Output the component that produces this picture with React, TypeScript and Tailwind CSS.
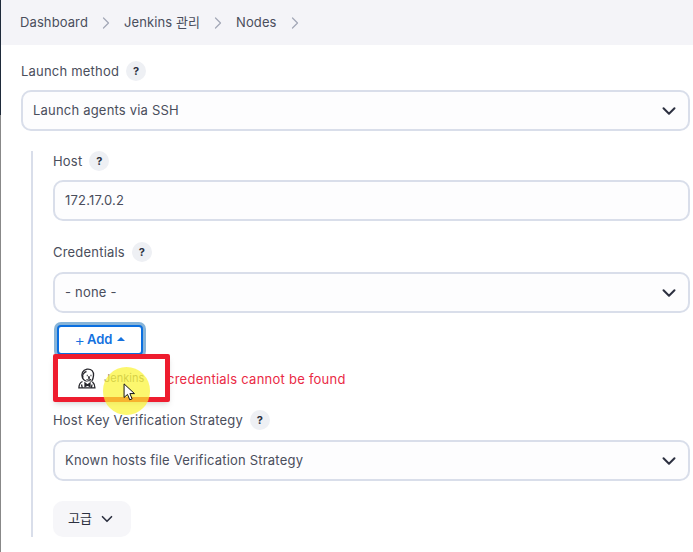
import { ChevronDown, ChevronRight } from "lucide-react";

const FONT = "font-['Inter','Noto_Sans_CJK_KR',sans-serif]";

function Help() {
  return (
    <span className="flex h-5 w-5 items-center justify-center rounded-full bg-[#eef0f4] text-[11px] font-bold text-[#2c3040]">
      ?
    </span>
  );
}

function Label({ text }: { text: string }) {
  return (
    <div className="flex h-5 items-center gap-[7px] text-[13px] tracking-[0.2px] text-[#4a4e5c]">
      <span className="pt-[1px]">{text}</span>
      <Help />
    </div>
  );
}

function Field({ value, select }: { value: string; select?: boolean }) {
  return (
    <div className="flex h-[41px] items-center justify-between rounded-[10px] border-2 border-[#d9deea] bg-[#fdfdfe] pl-[10px] pr-[8px] text-[13px] tracking-[0.2px] text-[#4a4e5c]">
      <span>{value}</span>
      {select && <ChevronDown className="h-[22px] w-[22px] text-[#2c3040]" strokeWidth={2.2} />}
    </div>
  );
}

function Crumb({ text }: { text: string }) {
  return (
    <>
      <span>{text}</span>
      <ChevronRight className="h-5 w-5 text-[#a3a8b8]" strokeWidth={1.5} />
    </>
  );
}

function JenkinsFace() {
  return (
    <svg viewBox="0 0 18 21" className="h-[21px] w-[18px]" fill="none" stroke="#26262c" strokeWidth="1.3">
      <path d="M4.500 10C3 6 4.500 1.800 9 1.100c4.500-.5 7 2.400 6.500 6.500-.2 2-.6 3.500-1.400 4.900-1.200 1.800-3.600 2.200-5.500 1.100C6.700 12.800 5.300 12 4.500 10Z" fill="#ffffff" />
      <path d="M5 6.500c1-2 2-2.800 3.500-3M5.500 9c-1 0-1.300-1.800-.3-2.300" />
      <path d="M8.800 7.500h.9M12.500 7.500h.9M11 8l-.3 2h1.300M8.500 11.500c1.500.9 3 .9 4.500-.1" />
      <path d="M4.500 13.500C2.500 14.300 1 16 .9 19.800h16c-.2-2.500-.8-4.500-2.500-6" fill="#ffffff" />
      <path d="M7 15l2.500 2 2.500-2v3.500l-2.500-1.300L7 18.500Z" fill="#26262c" />
      <path d="M3.500 16.500l.8 3.300M14 16.500l-.6 3.300" />
    </svg>
  );
}

function CursorHighlight() {
  return (
    <div className="pointer-events-none absolute left-[103px] top-[367px] h-[48px] w-[47px] rounded-full bg-[#fbf430]/70">
      <svg viewBox="0 0 14 21" className="absolute left-[20px] top-[16px] h-[19px] w-[13px]">
        <path d="M1 1v15l3.800-3.400 2.500 6 2.600-1.100-2.500-5.800H12.500Z" fill="#ffffff" stroke="#111111" strokeWidth="1.100" />
      </svg>
    </div>
  );
}

export default function App() {
  return (
    <div className={`relative h-[552px] w-[693px] overflow-hidden bg-white ${FONT}`}>
      <div className="flex h-[45px] items-center bg-[#f4f4f8] pl-5 text-[13px] tracking-[0.1px] text-[#4a4e5c]">
        <div className="flex items-center gap-2">
          <Crumb text="Dashboard" />
          <Crumb text="Jenkins 관리" />
          <Crumb text="Nodes" />
        </div>
      </div>

      <div className="pl-[21px] pr-[3px] pt-4">
        <Label text="Launch method" />
        <div className="mt-[9px]">
          <Field value="Launch agents via SSH" select />
        </div>

        <div className="ml-[10px] mt-5 h-[386px] border-l-2 border-[#d9deea] pl-5">
          <Label text="Host" />
          <div className="mt-[9px]">
            <Field value="172.17.0.2" />
          </div>

          <div className="mt-[21px]">
            <Label text="Credentials" />
          </div>
          <div className="mt-[10px]">
            <Field value="- none -" select />
          </div>

          <div className="ml-px mt-[9px] h-[36px] w-[92px] rounded-[7px] bg-[#87b4d8] p-[3px]">
            <div className="flex h-[30px] items-center justify-center gap-[5px] rounded-[4px] border-2 border-[#0b6fe0] bg-white text-[13px] text-[#1472df]">
              <span className="text-[16px] font-light leading-none">+</span>
              <span className="-ml-[3px] font-semibold">Add</span>
              <span className="mb-[2px] h-0 w-0 border-x-[4px] border-b-[4px] border-x-transparent border-b-[#1472df]" />
            </div>
          </div>

          <div className="mt-[11px] h-[20px] pl-[114px] text-[13px] leading-5 tracking-[0.25px] text-[#ea2a45]">
            credentials cannot be found
          </div>

          <div className="mt-[21px]">
            <Label text="Host Key Verification Strategy" />
          </div>
          <div className="mt-[10px]">
            <Field value="Known hosts file Verification Strategy" select />
          </div>

          <div className="mt-5 flex h-9 w-[78px] items-center justify-center gap-[6px] rounded-[10px] bg-[#f6f6f9] text-[13px] text-[#2c3040]">
            <span>고급</span>
            <ChevronDown className="h-[18px] w-[18px]" strokeWidth={2.2} />
          </div>
        </div>
      </div>

      <div className="absolute left-[53px] top-[354px] flex h-[48px] w-[117px] items-center rounded-[2px] border-[5px] border-[#ee1c2e] bg-white pl-[20px] text-[11px] text-[#7f7f7f] shadow-md">
        <JenkinsFace />
        <span className="ml-[8px]">Jenkins</span>
      </div>

      <CursorHighlight />

      <div className="absolute bottom-0 left-0 top-0 flex w-px flex-col">
        <div className="h-[115px] bg-[#1e2a3a]" />
        <div className="flex-1 bg-[#888888]" />
      </div>
    </div>
  );
}
